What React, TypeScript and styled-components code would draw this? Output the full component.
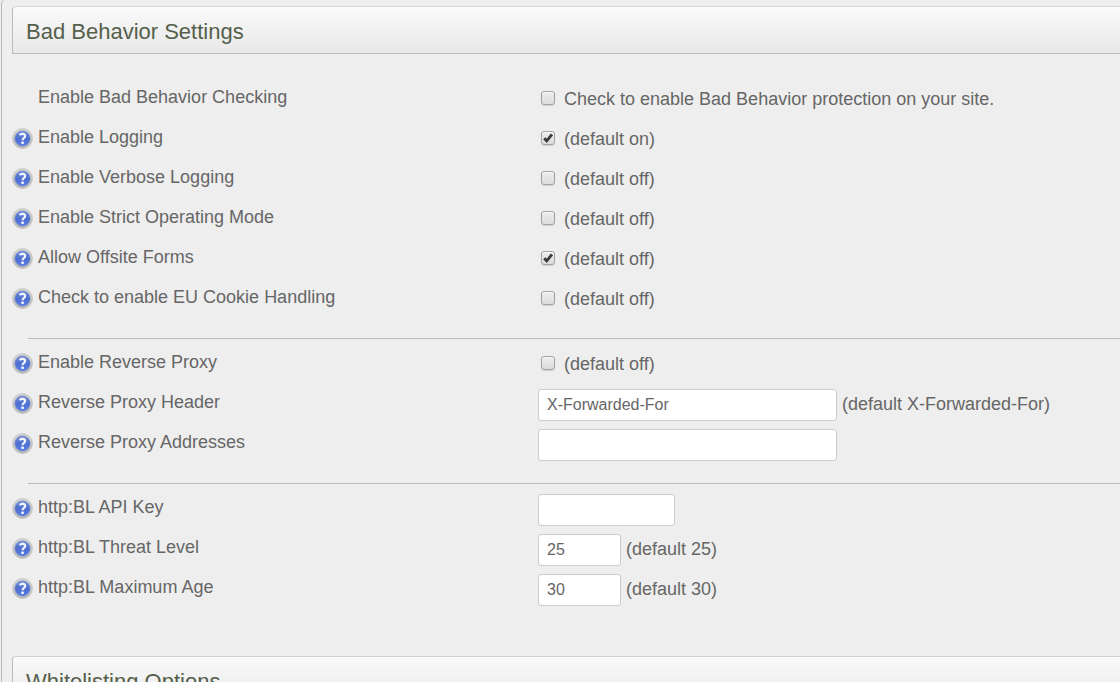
import React, { useId, useState } from "react";
import styled, { createGlobalStyle } from "styled-components";

const GlobalStyle = createGlobalStyle`
  *, *::before, *::after { box-sizing: border-box; }
  html, body { margin: 0; height: 100%; }
  body {
    background: #eee;
    color: #666;
    font-family: "Liberation Sans", Arial, Helvetica, sans-serif;
    font-size: 18px;
    line-height: 20px;
    overflow: hidden;
  }
  #root { height: 100%; }
`;

const Page = styled.main`
  height: 100%;
  overflow: hidden;
  padding-left: 1px;
`;

const Panel = styled.form`
  min-height: 100%;
  padding: 6px 0 0 10px;
  border-left: 1px solid #bbb;
  border-top-left-radius: 4px;
`;

const SectionTitle = styled.h2`
  margin: 0;
  height: 48px;
  padding: 0 13px;
  border: 1px solid #bbb;
  border-top-color: #d4d4d4;
  border-right: 0;
  border-top-left-radius: 4px;
  background: linear-gradient(#fafafa, #e8e8e8);
  color: #555f4b;
  font-size: 22px;
  font-weight: 400;
  line-height: 50px;
`;

const SectionBody = styled.div`
  padding: 23px 0 49px;
`;

const Divider = styled.hr`
  margin: 21px 0 3px 16px;
  border: 0;
  border-top: 1px solid #bbb;
`;

const Row = styled.div`
  display: grid;
  grid-template-columns: 26px 500px minmax(0, 1fr);
  align-items: center;
  height: 40px;
`;

const HelpButton = styled.button`
  display: block;
  width: 21px;
  height: 21px;
  margin: 3px 0 0;
  padding: 0;
  border: 0;
  background: none;
  cursor: help;
`;

const Label = styled.label`
  grid-column: 2;
  justify-self: start;
  padding-bottom: 1px;
`;

const CheckControl = styled.div`
  grid-column: 3;
  display: flex;
  align-items: center;
  gap: 9px;
  padding: 4px 0 0 3px;
  white-space: nowrap;
`;

const TextControl = styled.div`
  grid-column: 3;
  display: flex;
  align-items: center;
  gap: 5px;
  padding-top: 6px;
  white-space: nowrap;
`;

const Hint = styled.span`
  padding-bottom: 2px;
`;

const CheckBox = styled.span`
  display: grid;
  width: 14px;
  height: 14px;
  margin-bottom: 2px;
  > * { grid-area: 1 / 1; }
  svg { pointer-events: none; }
`;

const CheckInput = styled.input`
  appearance: none;
  width: 14px;
  height: 14px;
  margin: 0;
  border: 1px solid #a2a2a2;
  border-radius: 3px;
  background: linear-gradient(#ededed, #dcdcdc);
  box-shadow: 0 1px 1px rgba(0, 0, 0, 0.12), inset 0 1px 1px rgba(255, 255, 255, 0.7);
`;

const TextInput = styled.input<{ $width: number }>`
  width: ${(p) => p.$width}px;
  height: 32px;
  margin: 0;
  padding: 0 8px;
  border: 1px solid #ccc;
  border-radius: 3px;
  background: #fff;
  color: #666;
  font: 16px "Liberation Sans", Arial, Helvetica, sans-serif;
`;

function Help({ topic }: { topic: string }) {
  const id = useId();
  return (
    <HelpButton type="button" aria-label={`Help: ${topic}`}>
      <svg width="21" height="21" viewBox="0 0 21 21" aria-hidden="true">
        <defs>
          <linearGradient id={`${id}r`} x1="0" y1="0" x2="0" y2="1">
            <stop offset="0" stopColor="#dadad8" />
            <stop offset="1" stopColor="#bcbcba" />
          </linearGradient>
          <linearGradient id={`${id}b`} x1="0" y1="0" x2="0" y2="1">
            <stop offset="0" stopColor="#7892dc" />
            <stop offset="0.5" stopColor="#4c6ed0" />
            <stop offset="1" stopColor="#5c80ea" />
          </linearGradient>
        </defs>
        <circle cx="10.5" cy="10.5" r="9.9" fill={`url(#${id}r)`} stroke="#bdbdbb" strokeWidth="0.8" />
        <circle cx="10.5" cy="10.5" r="7.6" fill={`url(#${id}b)`} stroke="#6f86c4" strokeWidth="0.8" />
        <path d="M7.7 7.1C8.9 5.4 13.1 5.3 13.1 8C13.1 9.9 10.6 9.9 10.6 12.2" fill="none" stroke="#f4f6fc" strokeWidth="2.2" />
        <rect x="9.3" y="13.5" width="2.6" height="2.4" rx="0.7" fill="#f4f6fc" />
      </svg>
    </HelpButton>
  );
}

interface SettingProps {
  label: string;
  hint?: string;
  help?: boolean;
}

function CheckSetting({ label, hint, help = true, on = false }: SettingProps & { on?: boolean }) {
  const id = useId();
  const [checked, setChecked] = useState(on);
  return (
    <Row>
      {help && <Help topic={label} />}
      <Label htmlFor={id}>{label}</Label>
      <CheckControl>
        <CheckBox>
          <CheckInput id={id} type="checkbox" checked={checked} onChange={(e) => setChecked(e.target.checked)} />
          {checked && (
            <svg width="14" height="14" viewBox="0 0 14 14" aria-hidden="true">
              <path d="M3.2 7.2L5.7 9.8L11 3.4" fill="none" stroke="#3a3a3a" strokeWidth="2.8" />
            </svg>
          )}
        </CheckBox>
        <label htmlFor={id}>{hint}</label>
      </CheckControl>
    </Row>
  );
}

function TextSetting({ label, hint, value = "", width }: SettingProps & { value?: string; width: number }) {
  const id = useId();
  return (
    <Row>
      <Help topic={label} />
      <Label htmlFor={id}>{label}</Label>
      <TextControl>
        <TextInput id={id} type="text" defaultValue={value} $width={width} />
        {hint && <Hint>{hint}</Hint>}
      </TextControl>
    </Row>
  );
}

export default function App() {
  return (
    <>
      <GlobalStyle />
      <Page>
        <Panel>
          <SectionTitle>Bad Behavior Settings</SectionTitle>
          <SectionBody>
            <CheckSetting
              label="Enable Bad Behavior Checking"
              hint="Check to enable Bad Behavior protection on your site."
              help={false}
            />
            <CheckSetting label="Enable Logging" hint="(default on)" on />
            <CheckSetting label="Enable Verbose Logging" hint="(default off)" />
            <CheckSetting label="Enable Strict Operating Mode" hint="(default off)" />
            <CheckSetting label="Allow Offsite Forms" hint="(default off)" on />
            <CheckSetting label="Check to enable EU Cookie Handling" hint="(default off)" />
            <Divider />
            <CheckSetting label="Enable Reverse Proxy" hint="(default off)" />
            <TextSetting label="Reverse Proxy Header" value="X-Forwarded-For" hint="(default X-Forwarded-For)" width={299} />
            <TextSetting label="Reverse Proxy Addresses" width={299} />
            <Divider />
            <TextSetting label="http:BL API Key" width={137} />
            <TextSetting label="http:BL Threat Level" value="25" hint="(default 25)" width={83} />
            <TextSetting label="http:BL Maximum Age" value="30" hint="(default 30)" width={83} />
          </SectionBody>
          <SectionTitle>Whitelisting Options</SectionTitle>
        </Panel>
      </Page>
    </>
  );
}
